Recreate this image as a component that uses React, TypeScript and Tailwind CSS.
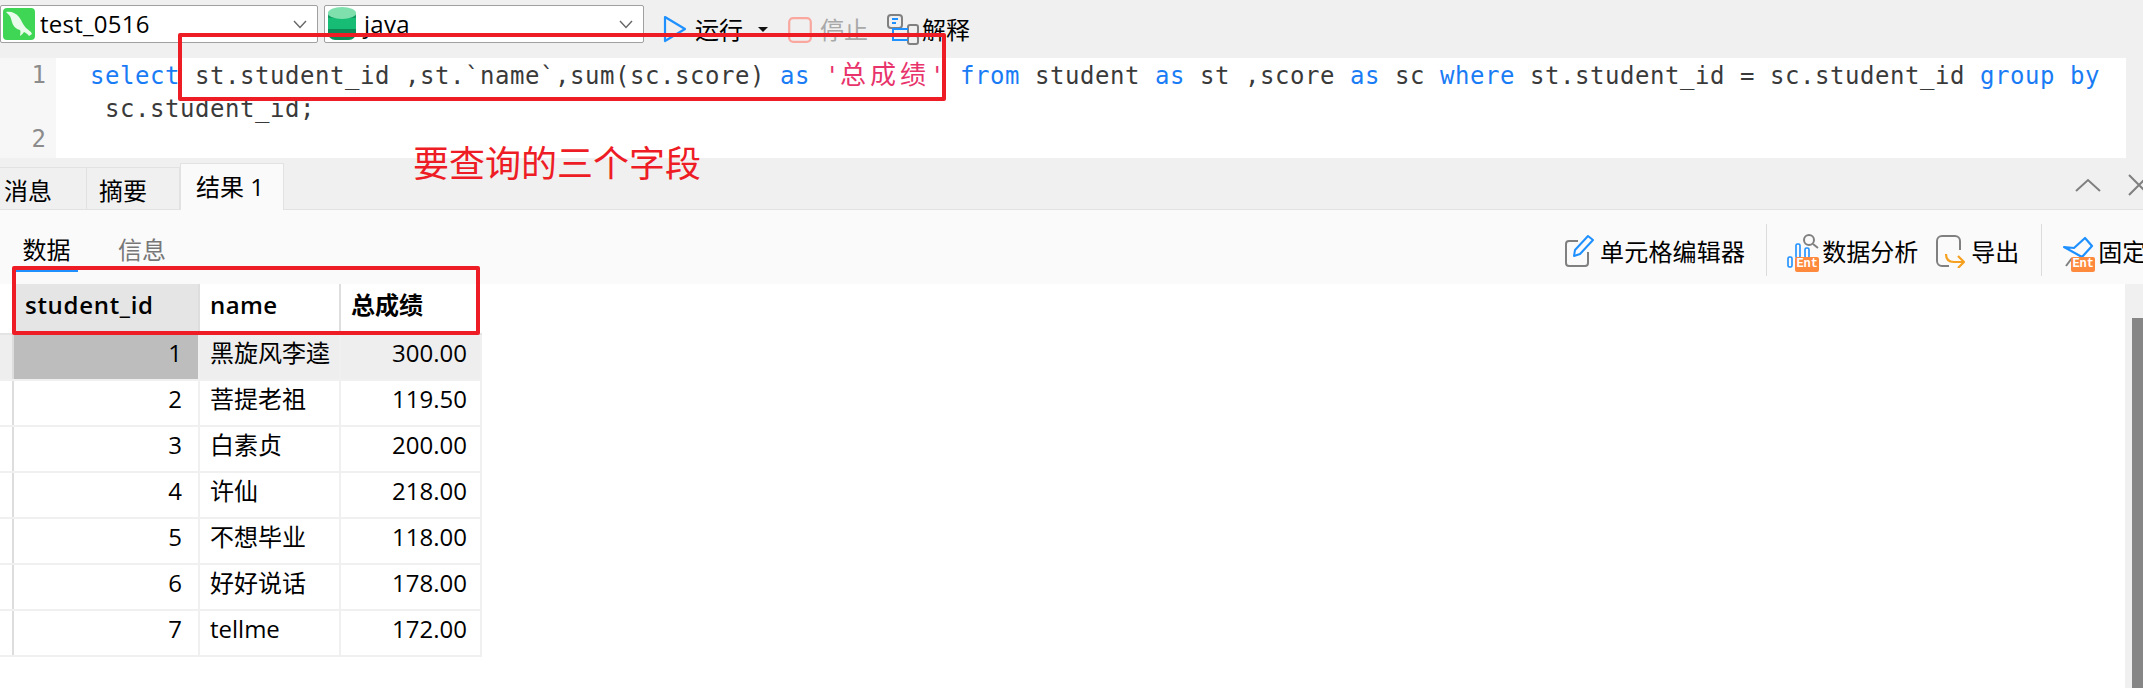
import React from "react";

const rows = [
  ["1", "黑旋风李逵", "300.00"],
  ["2", "菩提老祖", "119.50"],
  ["3", "白素贞", "200.00"],
  ["4", "许仙", "218.00"],
  ["5", "不想毕业", "118.00"],
  ["6", "好好说话", "178.00"],
  ["7", "tellme", "172.00"],
];

function Chevron() {
  return (
    <svg width="14" height="9" viewBox="0 0 14 9" fill="none" stroke="#666" strokeWidth="1.4">
      <path d="M1 1l6 6.5L13 1" />
    </svg>
  );
}

function Dolphin() {
  return (
    <svg width="32" height="32" viewBox="0 0 32 32" className="shrink-0">
      <rect width="32" height="32" rx="4" fill="#3fd655" />
      <path
        d="M3 4c5-1 10 1 13 5 3 4 4 8 7 11 2 2 5 3 6 6l-3 2c-1-2-3-3-5-4-1 1-2 3-4 4 0-2 1-4 0-6-4-1-7-4-8-8-1-3-1-5-3-7L3 4z"
        fill="#e9fbea"
      />
    </svg>
  );
}

function Db() {
  return (
    <svg width="30" height="36" viewBox="0 0 30 36" className="shrink-0">
      <rect x="1" y="3" width="28" height="31" rx="7" fill="#0f9d63" />
      <rect x="1" y="12" width="28" height="11" fill="#17bd75" />
      <ellipse cx="15" cy="7" rx="14" ry="6" fill="#7fe0ae" />
      <path d="M1 23h28v5c0 3-6 6-14 6S1 31 1 28z" fill="#0b8a57" />
    </svg>
  );
}

function Select({ icon, label, width, gap }: { icon: React.ReactNode; label: string; width: string; gap: string }) {
  return (
    <div className={`${width} h-[38px] bg-white border border-[#a0a0a0] rounded-[2px] flex items-center pl-[2px] pr-[10px] ${gap}`}>
      {icon}
      <span className="text-[24px] leading-[32px] tracking-[0.25px] text-black flex-1">{label}</span>
      <Chevron />
    </div>
  );
}

function EntBadge() {
  return (
    <span className="absolute left-[8px] bottom-[-4px] w-[24px] h-[15px] rounded-[2px] bg-[#ff8a3d] text-white text-[12px] leading-[15px] font-bold text-center font-['Liberation_Mono',monospace]">
      Ent
    </span>
  );
}

const kw = "text-[#1a7cf5]";
const tx = "text-[#3a3a3a]";

export default function App() {
  return (
    <div className="relative w-[2143px] h-[688px] overflow-hidden bg-white font-['Open_Sans','Noto_Sans_CJK_SC',sans-serif] text-black">
      {/* top toolbar */}
      <div className="h-[58px] bg-[#f0f0f0] flex items-start pt-[5px]">
        <Select icon={<Dolphin />} label="test_0516" width="w-[318px]" gap="gap-[5px]" />
        <div className="w-[6px]" />
        <Select icon={<Db />} label="java" width="w-[320px]" gap="gap-[7px]" />
        <div className="flex items-center h-[46px] ml-[19px] text-[24px] leading-[32px]">
          <svg width="24" height="28" viewBox="0 0 24 28" fill="none" stroke="#1e90ff" strokeWidth="2.2" className="mt-[2px]">
            <path d="M2 2l20 12L2 26z" strokeLinejoin="round" />
          </svg>
          <span className="ml-[8px] mt-[3px]">运行</span>
          <svg width="10" height="5" viewBox="0 0 10 5" className="ml-[15px] mt-[2px]">
            <path d="M0 0h10L5 5z" fill="#111" />
          </svg>
          <svg width="24" height="26" viewBox="0 0 24 26" fill="none" stroke="#f9a79f" strokeWidth="2.2" className="ml-[20px] mt-[3px]">
            <rect x="1.2" y="1.2" width="21.6" height="23.6" rx="4" />
          </svg>
          <span className="ml-[8px] mt-[3px] text-[#a8a8a8]">停止</span>
          <svg width="32" height="31" viewBox="0 0 32 31" fill="none" className="ml-[19px] mt-[2px]">
            <rect x="1" y="1" width="14" height="13" rx="3" stroke="#808080" strokeWidth="2" />
            <path d="M5 5h6M5 9h4" stroke="#1e90ff" strokeWidth="1.8" />
            <rect x="21" y="11" width="10" height="9" rx="2" stroke="#808080" strokeWidth="2" />
            <rect x="21" y="22" width="10" height="8" rx="2" stroke="#808080" strokeWidth="2" />
            <path d="M6 14v12h15M6 15h15" stroke="#1e90ff" strokeWidth="2" />
          </svg>
          <span className="ml-[3px] mt-[3px]">解释</span>
        </div>
      </div>

      {/* editor */}
      <div className="h-[100px] bg-[#f0f0f0] pr-[17px]">
        <div className="h-full flex bg-white">
          <div className="w-[56px] shrink-0 bg-[#f7f7f7] text-[#8c8c8c] text-[24px] leading-[33px] text-right pr-[10px] font-['DejaVu_Sans_Mono',monospace]">
            <div className="pt-[1px]">1</div>
            <div className="mt-[31px]">2</div>
          </div>
          <div className="pl-[34px] pt-[1px] text-[24px] leading-[32.5px] whitespace-pre font-['DejaVu_Sans_Mono','Noto_Sans_CJK_SC',monospace] tracking-[0.55px]">
            <div className={tx}>
              <span className={kw}>select</span> st.student_id ,st.`name`,sum(sc.score) <span className={kw}>as</span>{" "}
              <span className="text-[#e8336b]">'<span className="text-[26px] tracking-[4px]">总成绩</span>'</span>{" "}
              <span className={kw}>from</span> student <span className={kw}>as</span> st ,score <span className={kw}>as</span> sc{" "}
              <span className={kw}>where</span> st.student_id = sc.student_id <span className={kw}>group</span> <span className={kw}>by</span>
            </div>
            <div className={tx}> sc.student_id;</div>
          </div>
        </div>
      </div>

      {/* result tabs */}
      <div className="h-[52px] bg-[#f0f0f0] border-b border-[#e2e2e2] flex items-end text-[24px] relative">
        <div className="w-[87px] h-[42px] border-r border-t border-[#e2e2e2] pl-[4px] leading-[46px]">消息</div>
        <div className="w-[93px] h-[42px] border-r border-t border-[#e2e2e2] pl-[12px] leading-[46px]">摘要</div>
        <div className="w-[104px] h-[47px] bg-[#fafafa] border-x border-t border-[#e2e2e2] pl-[15px] leading-[46px] -mb-px">结果 1</div>
        <div className="ml-auto flex items-center gap-[26px] h-[42px] -mr-[8px] pb-[6px]">
          <svg width="26" height="14" viewBox="0 0 26 14" fill="none" stroke="#808080" strokeWidth="2">
            <path d="M1 13L13 2l12 11" />
          </svg>
          <svg width="24" height="24" viewBox="0 0 24 24" fill="none" stroke="#808080" strokeWidth="2">
            <path d="M2 2l20 20M22 2L2 22" />
          </svg>
        </div>
      </div>

      {/* sub toolbar */}
      <div className="h-[74px] bg-[#fafafa] flex items-stretch text-[24px] leading-[32px]">
        <div className="flex items-start pl-[15px]">
          <div className="w-[63px] h-[62px] border-b-2 border-[#1e90ff] text-center pt-[24px] leading-[32px]">数据</div>
          <div className="ml-[40px] pt-[24px] text-[#777]">信息</div>
        </div>
        <div className="ml-auto w-[579px] flex items-center whitespace-nowrap overflow-hidden pt-[16px] pb-[10px]">
          <svg width="30" height="34" viewBox="0 0 30 34" fill="none" className="mt-[2px] shrink-0">
            <path d="M14 7H5a3 3 0 0 0-3 3v19a3 3 0 0 0 3 3h16a3 3 0 0 0 3-3v-11" stroke="#808080" strokeWidth="2" />
            <path d="M10 22l1-6L24 2l5 4-13 14z" stroke="#1e90ff" strokeWidth="2" strokeLinejoin="round" />
          </svg>
          <span className="ml-[6px] mt-[4px] tracking-[0.2px] shrink-0">单元格编辑器</span>
          <div className="w-px h-[52px] bg-[#dcdcdc] ml-[21px] shrink-0" />
          <div className="relative w-[32px] h-[34px] ml-[20px] mt-[2px] shrink-0">
            <svg width="32" height="34" viewBox="0 0 32 34" fill="none">
              <rect x="1" y="23" width="4" height="10" rx="1.5" stroke="#1e90ff" strokeWidth="1.6" />
              <rect x="9" y="10" width="4" height="14" rx="1.5" stroke="#1e90ff" strokeWidth="1.6" />
              <rect x="18" y="14" width="4" height="10" rx="1.5" stroke="#1e90ff" strokeWidth="1.6" />
              <circle cx="22" cy="6" r="5" stroke="#808080" strokeWidth="2" />
              <path d="M26 10l5 4" stroke="#808080" strokeWidth="2" />
            </svg>
            <EntBadge />
          </div>
          <span className="ml-[3px] mt-[4px] shrink-0">数据分析</span>
          <svg width="30" height="34" viewBox="0 0 30 34" fill="none" className="ml-[17px] mt-[2px] shrink-0">
            <path d="M14 32H7a5 5 0 0 1-5-5V7a5 5 0 0 1 5-5h13a5 5 0 0 1 5 5v9" stroke="#808080" strokeWidth="2" />
            <path d="M11 20c0 6 4 8 8 8h9M23 22l6 6-6 6" stroke="#f5a01f" strokeWidth="2.2" />
          </svg>
          <span className="ml-[6px] mt-[4px] shrink-0">导出</span>
          <div className="w-px h-[52px] bg-[#dcdcdc] ml-[22px] shrink-0" />
          <div className="relative w-[32px] h-[34px] ml-[21px] mt-[2px] shrink-0">
            <svg width="32" height="34" viewBox="0 0 32 34" fill="none">
              <path d="M1 13l10 1 11-10 7 8-10 11z" stroke="#1e90ff" strokeWidth="2.2" strokeLinejoin="round" />
              <path d="M9 24l-6 8" stroke="#808080" strokeWidth="2" />
            </svg>
            <EntBadge />
          </div>
          <span className="ml-[3px] mt-[4px] shrink-0">固定</span>
        </div>
      </div>

      {/* result table */}
      <div className="h-[404px] flex justify-between">
        <div className="w-[482px] text-[24px]">
          <div className="h-[51px] flex font-semibold border-b-2 border-[#e4e4e4]">
            <div className="w-[14px]" />
            <div className="w-[186px] bg-[#e5e5e5] pl-[11px] leading-[42px] tracking-[0.7px] border-r-2 border-[#dedede]">student_id</div>
            <div className="w-[141px] pl-[10px] leading-[42px] tracking-[0.4px] border-r-2 border-[#dedede]">name</div>
            <div className="flex-1 pl-[10px] leading-[42px]">总成绩</div>
          </div>
          {rows.map((r, i) => {
            const on = i === 0;
            return (
              <div key={r[0]} className={`h-[46px] flex border-b-2 border-[#f0f0f0] ${on ? "bg-[#eeeeee]" : "bg-white"}`}>
                <div className="w-[12px] border-l-0" />
                <div className="w-[2px] bg-[#dddddd]" />
                <div className={`w-[184px] text-right pr-[16px] leading-[36px] ${on ? "bg-[#bdbdbd]" : ""}`}>{r[0]}</div>
                <div className="w-[2px] bg-[#f0f0f0]" />
                <div className="w-[139px] pl-[10px] leading-[36px] whitespace-nowrap overflow-hidden">{r[1]}</div>
                <div className="w-[2px] bg-[#f0f0f0]" />
                <div className="w-[139px] text-right pr-[13px] leading-[36px]">{r[2]}</div>
                <div className="w-[2px] bg-[#f0f0f0]" />
              </div>
            );
          })}
        </div>
        <div className="w-[18px] bg-[#f0f0f0] pl-[7px] pt-[34px]">
          <div className="h-full bg-[#868686]" />
        </div>
      </div>

      {/* annotations */}
      <div className="absolute left-[178px] top-[33px] w-[768px] h-[68px] border-[4px] border-[#ee1c25] rounded-[2px]" />
      <div className="absolute left-[12px] top-[266px] w-[468px] h-[69px] border-[4px] border-[#ee1c25] rounded-[2px]" />
      <div className="absolute left-[413px] top-[140px] text-[36px] leading-[48px] text-[#ee1c25] whitespace-nowrap">要查询的三个字段</div>
    </div>
  );
}
